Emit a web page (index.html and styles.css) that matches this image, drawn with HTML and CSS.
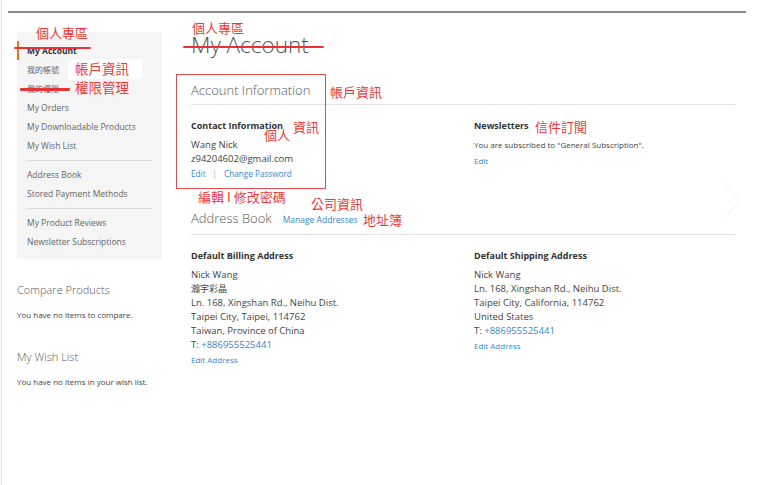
FILE: index.html
```html
<!DOCTYPE html>
<html lang="zh-Hant">
<head>
<meta charset="utf-8">
<title>My Account</title>
<link rel="stylesheet" href="styles.css">
</head>
<body>
<div class="frame">
  <div class="topbar"></div>
  <div class="page">
    <aside class="sidebar">
      <nav class="nav">
        <div class="nav-item current">My Account</div>
        <div class="nav-item cjk">我的帳號</div>
        <div class="nav-item cjk">我的權限</div>
        <div class="nav-item">My Orders</div>
        <div class="nav-item">My Downloadable Products</div>
        <div class="nav-item">My Wish List</div>
        <div class="nav-sep"></div>
        <div class="nav-item">Address Book</div>
        <div class="nav-item">Stored Payment Methods</div>
        <div class="nav-sep"></div>
        <div class="nav-item">My Product Reviews</div>
        <div class="nav-item">Newsletter Subscriptions</div>
      </nav>
      <div class="block">
        <div class="block-title">Compare Products</div>
        <p class="block-empty">You have no items to compare.</p>
      </div>
      <div class="block block-wish">
        <div class="block-title">My Wish List</div>
        <p class="block-empty">You have no items in your wish list.</p>
      </div>
    </aside>

    <main class="main">
      <h1 class="page-title">My Account</h1>

      <section class="section">
        <div class="section-title"><span class="section-name">Account Information</span></div>
        <div class="cols">
          <div class="box">
            <h3 class="box-title">Contact Information</h3>
            <div class="box-content">Wang Nick<br>z94204602@gmail.com</div>
            <div class="box-actions"><a class="link">Edit</a><span class="sep">|</span><a class="link">Change Password</a></div>
          </div>
          <div class="box">
            <h3 class="box-title">Newsletters</h3>
            <div class="box-content small">You are subscribed to "General Subscription".</div>
            <div class="box-actions"><a class="link">Edit</a></div>
          </div>
        </div>
      </section>

      <section class="section section-address">
        <div class="section-title"><span class="section-name">Address Book</span><a class="link manage">Manage Addresses</a></div>
        <div class="cols">
          <div class="box">
            <h3 class="box-title">Default Billing Address</h3>
            <address class="addr">Nick Wang<br><span class="cjk-inline">瀚宇彩晶</span><br>Ln. 168, Xingshan Rd., Neihu Dist.<br>Taipei City, Taipei, 114762<br>Taiwan, Province of China<br>T: <a class="link tel">+886955525441</a></address>
            <div class="box-actions"><a class="link">Edit Address</a></div>
          </div>
          <div class="box">
            <h3 class="box-title">Default Shipping Address</h3>
            <address class="addr">Nick Wang<br>Ln. 168, Xingshan Rd., Neihu Dist.<br>Taipei City, California, 114762<br>United States<br>T: <a class="link tel">+886955525441</a></address>
            <div class="box-actions"><a class="link">Edit Address</a></div>
          </div>
        </div>
      </section>
    </main>
  </div>

  <svg class="chevron" width="24" height="40" viewBox="0 0 24 40"><path d="M2 2 L20 20 L4 38" fill="none" stroke="#f7f7f7" stroke-width="1.5"/></svg>

  <div class="mark-line ml1"></div>
  <div class="mark-line ml2"></div>
  <div class="mark-line ml3"></div>
  <div class="mark-box"></div>

  <div class="note n1">個人專區</div>
  <div class="note n2">帳戶資訊</div>
  <div class="note n3">權限管理</div>
  <div class="note n4">個人專區</div>
  <div class="note n5">帳戶資訊</div>
  <div class="note n6">資訊</div>
  <div class="note n7">個人</div>
  <div class="note n8">編輯 I 修改密碼</div>
  <div class="note n9">公司資訊</div>
  <div class="note n10">地址簿</div>
  <div class="note n11">信件訂閱</div>
</div>
</body>
</html>
```

FILE: styles.css
```css
* { box-sizing: border-box; }
html, body { margin: 0; padding: 0; background: #fff; }
body {
  font-family: "Open Sans", "Noto Sans CJK TC", sans-serif;
  color: #444;
  width: 763px;
  height: 485px;
  overflow: hidden;
}
.frame {
  position: relative;
  height: 485px;
  margin-left: 1px;
  padding-top: 11px;
  border-left: 1px solid #d9e1ee;
}
.topbar {
  margin: 0 17px 0 6px;
  height: 2px;
  background: #8a8a8a;
}
.page {
  display: flex;
  padding: 19px 28px 0 15px;
}
.sidebar { width: 145px; flex: none; }
.nav {
  background: #f5f5f5;
  padding: 9px 0 8px;
}
.nav-item {
  font-size: 8.5px;
  line-height: 19px;
  height: 19px;
  padding-left: 10px;
  color: #666;
  white-space: nowrap;
}
.nav-item.cjk {
  font-family: "Noto Sans CJK TC", sans-serif;
  font-size: 8px;
}
.nav-item.current {
  font-weight: 700;
  color: #333;
  border-left: 2px solid #ff6a13;
  padding-left: 8px;
}
.nav-sep {
  height: 1px;
  background: #d9d9d9;
  margin: 5px 10px 4px;
}
.block { margin-top: 24px; }
.block-wish { margin-top: 29px; }
.block-title {
  font-size: 11px;
  line-height: 14px;
  font-weight: 300;
  color: #575757;
}
.block-empty {
  margin: 12px 0 0;
  font-size: 8px;
  line-height: 12px;
  color: #444;
}

.main { flex: 1; margin-left: 29px; }
.page-title {
  margin: 0;
  font-size: 22.5px;
  line-height: 26px;
  font-weight: 300;
  color: #555;
}
.section { margin-top: 24px; }
.section-address { margin-top: 29px; }
.section-title {
  display: flex;
  align-items: baseline;
  padding-bottom: 6px;
  border-bottom: 1px solid #e3e3e3;
  line-height: 16px;
}
.section-name {
  font-size: 13px;
  font-weight: 300;
  color: #575757;
}
.manage { margin-left: 11px; font-size: 8.5px; }
.cols {
  display: grid;
  grid-template-columns: 1fr 1fr;
  column-gap: 22px;
  margin-top: 15px;
}
.section-address .cols { margin-top: 15px; }
.box-title {
  margin: 0 0 6px;
  font-size: 9px;
  line-height: 12px;
  font-weight: 700;
  color: #333;
}
.box-content {
  font-size: 9.5px;
  line-height: 14px;
  color: #444;
}
.box-content.small { font-size: 8px; }
.box-actions {
  font-size: 8.2px;
  line-height: 14px;
  margin-top: 1px;
}
.box-content.small + .box-actions { margin-top: 2px; font-size: 8px; }
.sep { color: #aaa; margin: 0 7px; }
.link { color: #3a85cc; text-decoration: none; }
.addr {
  font-style: normal;
  font-size: 9.5px;
  line-height: 14px;
  color: #444;
}
.addr .tel { font-size: 9.5px; }
.cjk-inline { font-family: "Noto Sans CJK TC", sans-serif; font-size: 9px; }
.addr + .box-actions { margin-top: 1px; font-size: 8px; }

.chevron { position: absolute; left: 718px; top: 181px; }

.mark-line { position: absolute; height: 2.5px; background: #e8323a; border-radius: 1px; }
.ml1 { left: 12px; top: 46.5px; width: 77px; }
.ml2 { left: 18px; top: 88px; width: 50px; }
.ml3 { left: 181px; top: 45.5px; width: 141px; }
.mark-box {
  position: absolute;
  left: 174px; top: 74px;
  width: 150px; height: 115px;
  border: 1.5px solid #e5484d;
}
.note {
  position: absolute;
  font-family: "Noto Sans CJK TC", sans-serif;
  font-size: 13px;
  line-height: 13px;
  color: #ec3a3a;
  white-space: nowrap;
}
.n1 { left: 34px; top: 26px; }
.n2 { left: 66px; top: 59px; width: 74px; height: 20px; padding: 1px 0 0 7px; background: #fff; font-size: 13.5px; line-height: 16px; }
.n3 { left: 73px; top: 81px; font-size: 13.5px; }
.n4 { left: 190px; top: 21px; }
.n5 { left: 328px; top: 85px; }
.n6 { left: 291px; top: 120px; }
.n7 { left: 262px; top: 128px; }
.n8 { left: 196px; top: 190px; }
.n9 { left: 309px; top: 197px; }
.n10 { left: 361px; top: 213px; }
.n11 { left: 533px; top: 120px; }
```
